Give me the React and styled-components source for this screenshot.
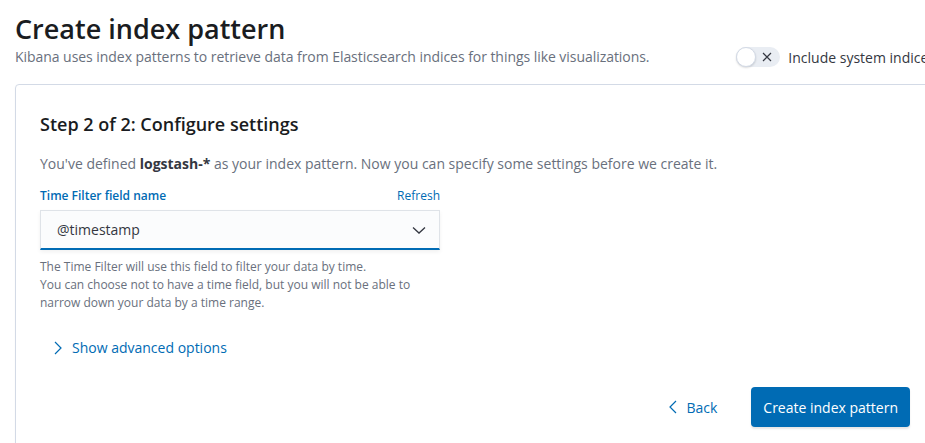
import React from "react";
import styled, { createGlobalStyle } from "styled-components";

const GlobalStyle = createGlobalStyle`
  body {
    margin: 0;
    background: #fff;
    font-family: "Open Sans", "Noto Sans", sans-serif;
    overflow: hidden;
  }
`;

export default function App() {
  return (
    <>
      <GlobalStyle />
      <Page>
        <Title>Create index pattern</Title>
        <HeaderRow>
          <Subtitle>
            Kibana uses index patterns to retrieve data from Elasticsearch
            indices for things like visualizations.
          </Subtitle>
          <SwitchWrap>
            <Track>
              <Knob />
              <svg width="12" height="12" viewBox="0 0 12 12">
                <path d="M2 2l8 8M10 2l-8 8" stroke="#343741" strokeWidth="1.2" fill="none" />
              </svg>
            </Track>
            <SwitchLabel>Include system indices</SwitchLabel>
          </SwitchWrap>
        </HeaderRow>
        <Panel>
          <StepTitle>Step 2 of 2: Configure settings</StepTitle>
          <Intro>
            You've defined <b>logstash-*</b> as your index pattern. Now you can
            specify some settings before we create it.
          </Intro>
          <Field>
            <LabelRow>
              <Label>Time Filter field name</Label>
              <LinkSmall>Refresh</LinkSmall>
            </LabelRow>
            <Select>
              <span>@timestamp</span>
              <svg width="16" height="16" viewBox="0 0 16 16">
                <path d="M2 5.5l6 5.5 6-5.5" stroke="#343741" strokeWidth="1.3" fill="none" />
              </svg>
            </Select>
            <Help>
              The Time Filter will use this field to filter your data by time.
              <br />
              You can choose not to have a time field, but you will not be able to
              narrow down your data by a time range.
            </Help>
          </Field>
          <Advanced>
            <svg width="10" height="16" viewBox="0 0 10 16">
              <path d="M2 2l6 6-6 6" stroke="#006bb4" strokeWidth="1.2" fill="none" />
            </svg>
            Show advanced options
          </Advanced>
          <Footer>
            <BackButton>
              <svg width="10" height="16" viewBox="0 0 10 16">
                <path d="M8 2L2 8l6 6" stroke="#006bb4" strokeWidth="1.2" fill="none" />
              </svg>
              Back
            </BackButton>
            <PrimaryButton>Create index pattern</PrimaryButton>
          </Footer>
        </Panel>
      </Page>
    </>
  );
}

const Page = styled.div`
  width: 920px;
  padding: 14px 0 0 15px;
`;

const Title = styled.h1`
  margin: 0;
  font-size: 27px;
  font-weight: 600;
  line-height: 30px;
  color: #1a1c21;
`;

const HeaderRow = styled.div`
  display: flex;
  justify-content: space-between;
  align-items: center;
  margin-top: 1px;
`;

const Subtitle = styled.p`
  margin: 0;
  font-size: 14px;
  line-height: 21px;
  color: #69707d;
  letter-spacing: -0.05px;
`;

const SwitchWrap = styled.div`
  display: flex;
  align-items: center;
  gap: 8px;
  margin-top: 2px;
`;

const Track = styled.div`
  position: relative;
  width: 44px;
  height: 20px;
  border-radius: 10px;
  background: #e9edf3;
  display: flex;
  align-items: center;
  justify-content: flex-end;
  padding-right: 7px;
  box-sizing: border-box;
`;

const Knob = styled.div`
  position: absolute;
  left: 0;
  top: 0;
  width: 20px;
  height: 20px;
  box-sizing: border-box;
  border-radius: 50%;
  background: #fff;
  border: 1px solid #d3dae6;
  box-shadow: 0 1px 2px rgba(0, 0, 0, 0.15);
`;

const SwitchLabel = styled.span`
  font-size: 14px;
  color: #343741;
  white-space: nowrap;
`;

const Panel = styled.div`
  margin-top: 17px;
  border: 1px solid #d3dae6;
  border-radius: 4px;
  padding: 26px 24px 24px;
  box-shadow: 0 1px 2px rgba(0, 0, 0, 0.04);
`;

const StepTitle = styled.h2`
  margin: 0;
  font-size: 18px;
  font-weight: 600;
  line-height: 26px;
  color: #1a1c21;
`;

const Intro = styled.p`
  margin: 16px 0 0;
  font-size: 14px;
  line-height: 21px;
  color: #69707d;
  b {
    color: #343741;
    font-weight: 700;
  }
`;

const Field = styled.div`
  width: 400px;
  margin-top: 13px;
`;

const LabelRow = styled.div`
  display: flex;
  justify-content: space-between;
  align-items: baseline;
  margin-bottom: 6px;
`;

const Label = styled.label`
  font-size: 12px;
  font-weight: 600;
  color: #006bb4;
`;

const LinkSmall = styled.span`
  font-size: 12px;
  color: #006bb4;
`;

const Select = styled.div`
  height: 40px;
  box-sizing: border-box;
  display: flex;
  align-items: center;
  justify-content: space-between;
  padding: 0 12px 0 16px;
  background: #fbfcfd;
  border: 1px solid #dfe3e8;
  border-bottom: 2px solid #006bb4;
  box-shadow: 0 2px 4px rgba(0, 0, 0, 0.06);
  font-size: 14px;
  color: #343741;
`;

const Help = styled.div`
  margin-top: 8px;
  font-size: 12px;
  line-height: 18px;
  color: #69707d;
`;

const Advanced = styled.div`
  display: flex;
  align-items: center;
  gap: 9px;
  margin: 26px 0 0 13px;
  font-size: 14px;
  color: #006bb4;
`;

const Footer = styled.div`
  display: flex;
  justify-content: flex-end;
  align-items: center;
  gap: 22px;
  margin-top: 30px;
`;

const BackButton = styled.button`
  display: flex;
  align-items: center;
  gap: 8px;
  border: none;
  background: none;
  padding: 0 12px;
  font: inherit;
  font-size: 14px;
  color: #006bb4;
`;

const PrimaryButton = styled.button`
  height: 40px;
  padding: 0 12px;
  border: none;
  border-radius: 4px;
  background: #006bb4;
  color: #fff;
  font: inherit;
  font-size: 14px;
  box-shadow: 0 2px 2px rgba(0, 0, 0, 0.1);
`;
